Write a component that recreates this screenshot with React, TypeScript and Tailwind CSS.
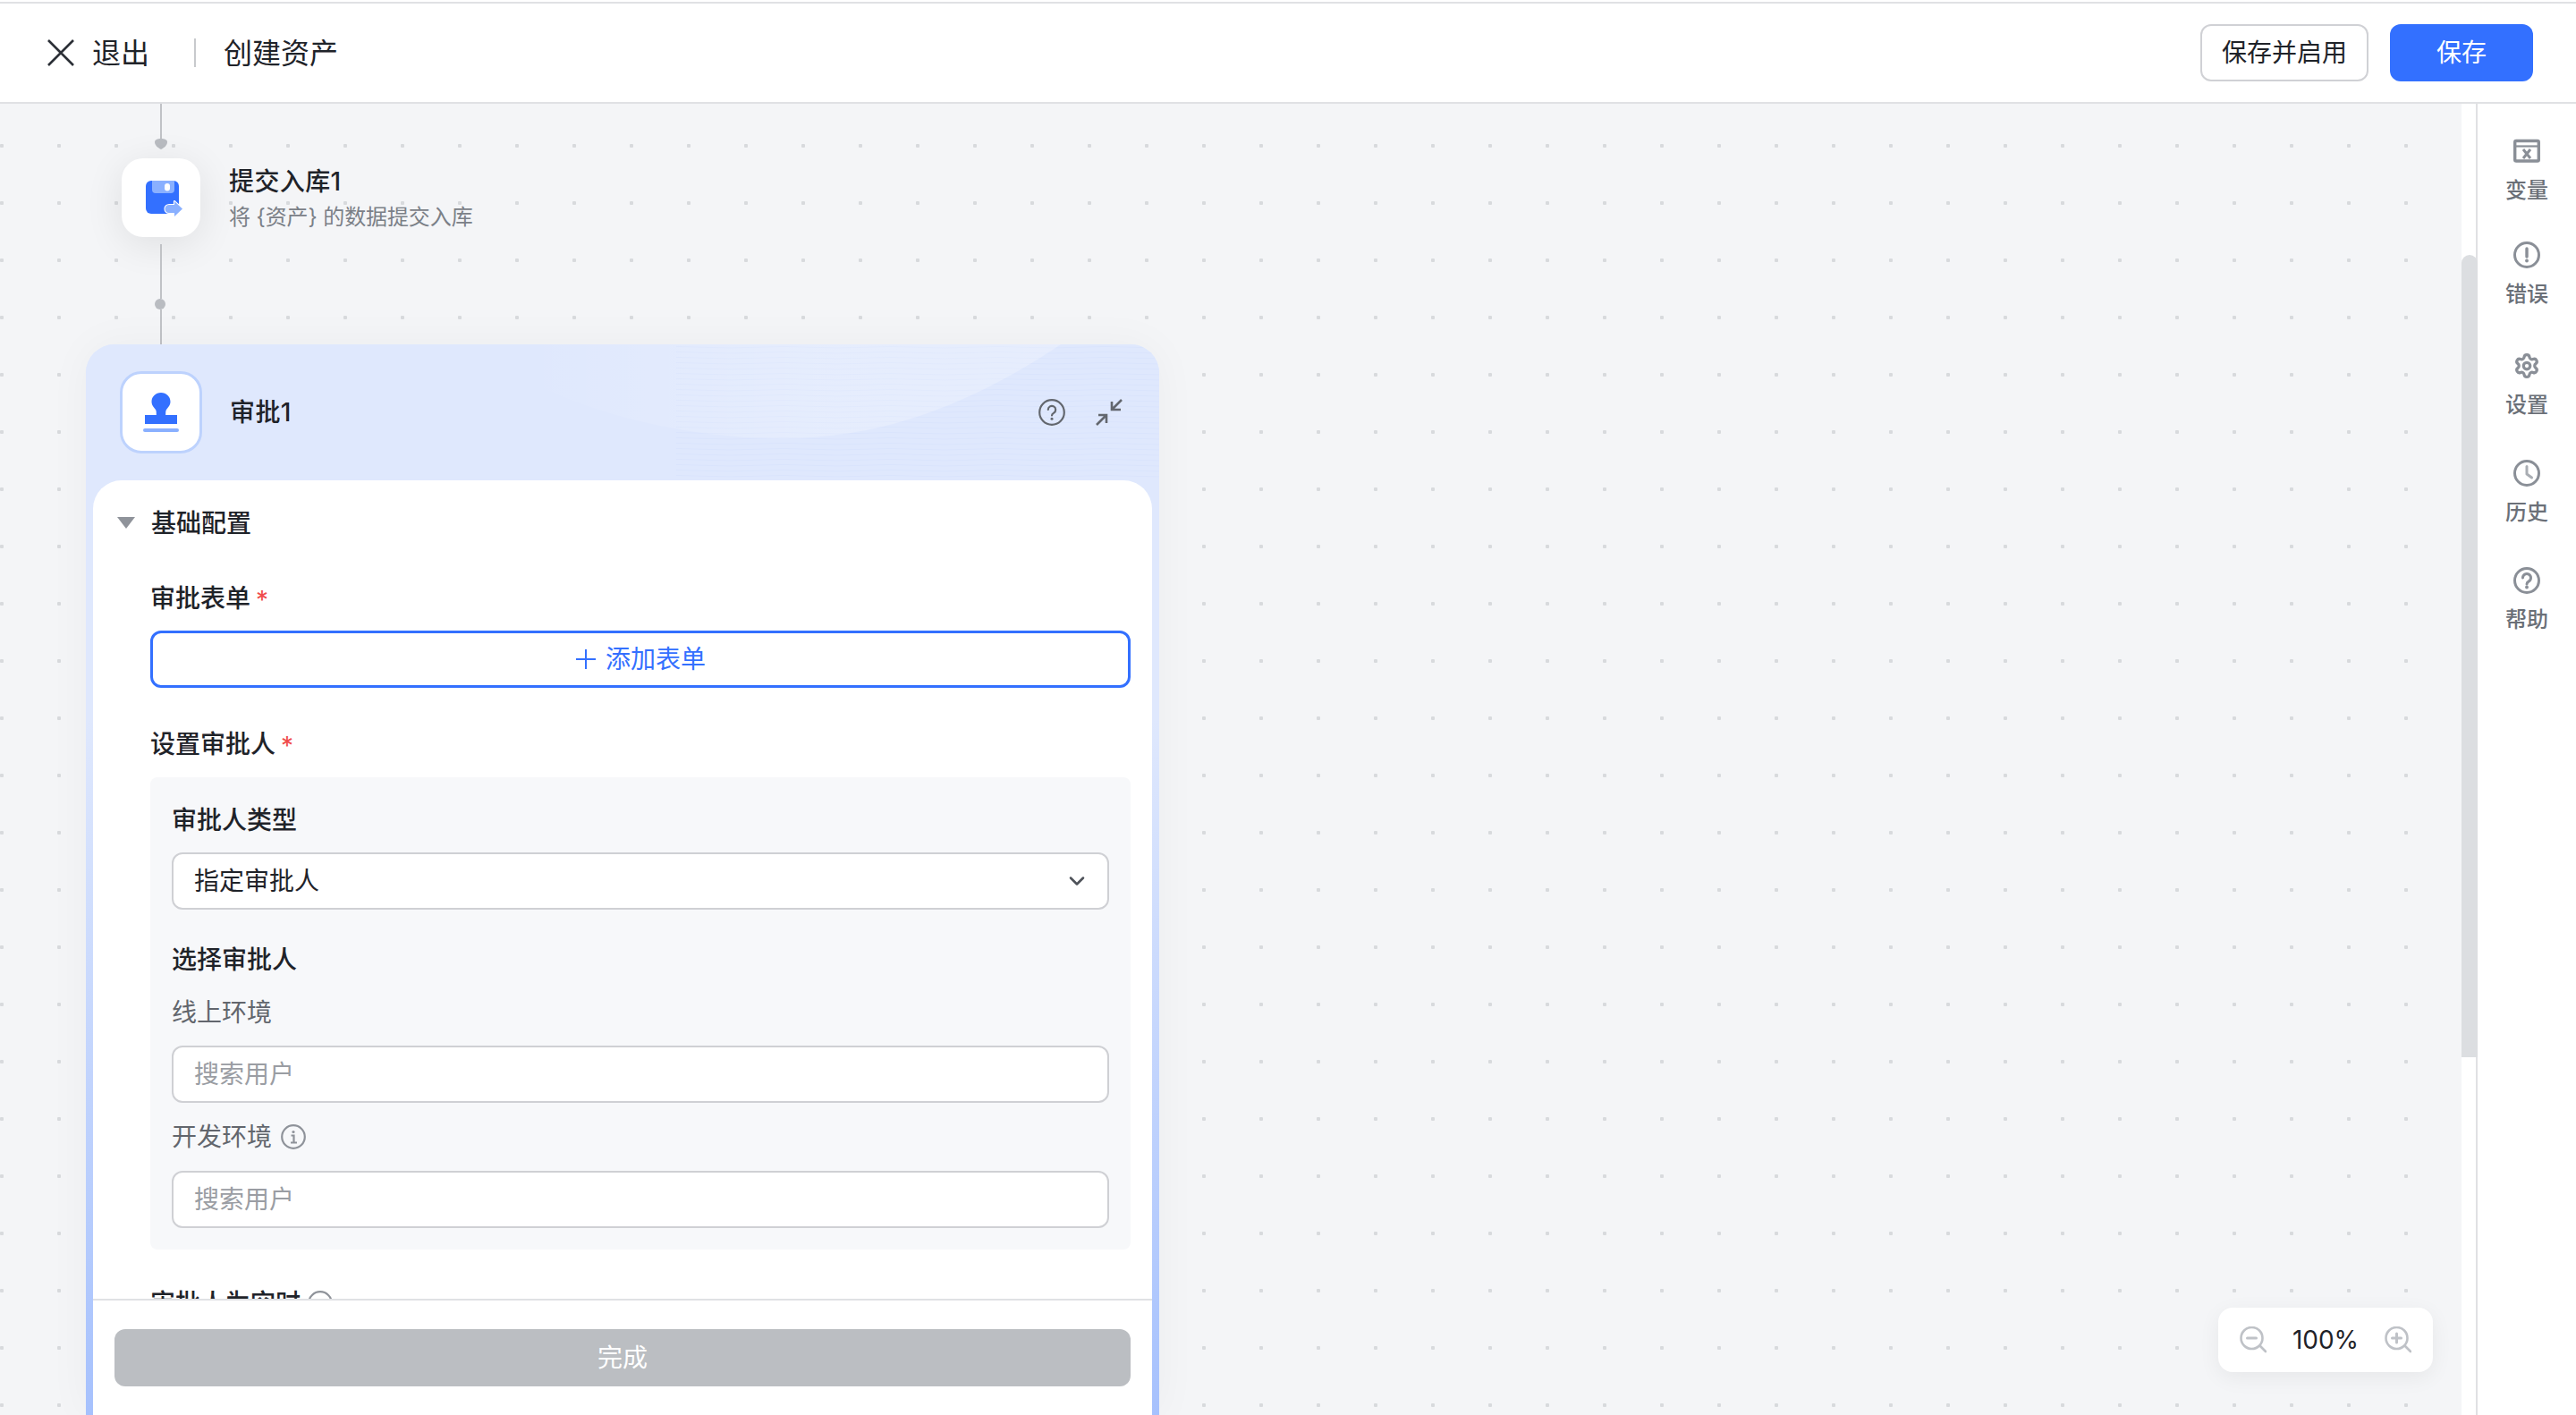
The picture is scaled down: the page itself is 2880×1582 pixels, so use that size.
import { ChevronDown, Settings } from 'lucide-react'

const font = { fontFamily: 'Inter, "Noto Sans CJK SC", "Noto Sans", sans-serif' }

const sideIconClass = 'h-[30px] w-[30px] shrink-0 text-[#8a8f97]'

const sideItems = [
  {
    label: '变量',
    gap: 'mt-0',
    icon: (
      <svg viewBox="0 0 30 30" fill="none" stroke="currentColor" strokeWidth={3.4} className={sideIconClass}>
        <rect x="1.700" y="3.500" width="26.600" height="22.500" rx="1.500" />
        <path d="M2 9.500h26" strokeWidth={2.200} />
        <path d="M11 13l8 10M19 13l-8 10" strokeWidth={3} />
      </svg>
    ),
  },
  {
    label: '错误',
    gap: 'mt-[39px]',
    icon: (
      <svg viewBox="0 0 30 30" fill="none" stroke="currentColor" strokeWidth={3} className={sideIconClass}>
        <circle cx="15" cy="15" r="13.500" />
        <path d="M15 8v9" strokeWidth={3.400} strokeLinecap="round" />
        <circle cx="15" cy="21.500" r="1.900" fill="currentColor" stroke="none" />
      </svg>
    ),
  },
  {
    label: '设置',
    gap: 'mt-[47px]',
    icon: <Settings strokeWidth={2.6} className={sideIconClass} />,
  },
  {
    label: '历史',
    gap: 'mt-[43px]',
    icon: (
      <svg viewBox="0 0 30 30" fill="none" stroke="currentColor" strokeWidth={3} className={sideIconClass}>
        <circle cx="15" cy="15" r="13.500" />
        <path d="M15 7.500V16l5.500 4" strokeLinecap="round" strokeLinejoin="round" stroke="#a9adb3" />
      </svg>
    ),
  },
  {
    label: '帮助',
    gap: 'mt-[43px]',
    icon: (
      <svg viewBox="0 0 30 30" fill="none" stroke="currentColor" strokeWidth={3} className={sideIconClass}>
        <circle cx="15" cy="15" r="13.500" />
        <path d="M10.500 12a4.500 4.500 0 1 1 6.800 3.900c-1.400.8-2.300 1.500-2.300 3" strokeLinecap="round" />
        <circle cx="15" cy="22.500" r="1.900" fill="currentColor" stroke="none" />
      </svg>
    ),
  },
]

const FloppyIcon = () => (
  <svg viewBox="0 0 44 44" className="h-[44px] w-[44px] translate-x-[3px]">
    <rect x="2" y="3" width="37" height="37" rx="6" fill="#3370ff" />
    <path d="M9 3h25v10a4 4 0 0 1-4 4H13a4 4 0 0 1-4-4Z" fill="#8ab0ff" />
    <rect x="23" y="6" width="6" height="8.500" rx="3" fill="#fff" />
    <path
      d="M28 30h6v-4l9 8.500-9 8.500v-4h-6a4.500 4.500 0 0 1 0-9Z"
      fill="#8ab0ff"
      stroke="#fff"
      strokeWidth={2.200}
      strokeLinejoin="round"
      paintOrder="stroke"
    />
  </svg>
)

const StampIcon = () => (
  <svg viewBox="0 0 44 48" className="h-[48px] w-[44px]">
    <path
      d="M22 2c6 0 10.500 4.500 10.500 10 0 4-2.500 6.500-4.500 9-.8 1-.8 3-.8 6H40v10H4V27h12.800c0-3 0-5-.8-6-2-2.500-4.500-5-4.500-9C11.500 6.500 16 2 22 2Z"
      fill="#3370ff"
    />
    <rect x="2" y="42" width="40" height="4" rx="2" fill="#8ab0ff" />
  </svg>
)

const Required = () => <span className="mt-[4px] ml-[6px] text-[28px] leading-none font-normal text-[#f04b4b]">*</span>

const TextField = () => (
  <input
    readOnly
    placeholder="搜索用户"
    style={font}
    className="block h-[64px] w-full rounded-[12px] border-2 border-[#cfd0d4] bg-white px-[23px] text-[28px] text-[#1f2329] outline-none placeholder:text-[#9a9da3]"
  />
)

const ZoomIcon = ({ plus }: { plus?: boolean }) => (
  <svg viewBox="0 0 30 30" fill="none" stroke="#bfc2c7" strokeWidth={2.600} className="h-[30px] w-[30px]">
    <circle cx="13.500" cy="13" r="12" />
    <path d="M23 22l6 6" strokeLinecap="round" />
    <path d={plus ? 'M8.500 13h10M13.500 8v10' : 'M8.500 13h10'} strokeWidth={3} strokeLinecap="round" />
  </svg>
)

export default function App() {
  return (
    <div style={font} className="flex h-[1582px] w-[2880px] flex-col overflow-hidden bg-white text-[#1f2329]">
      <header className="mt-[2px] flex h-[114px] shrink-0 items-center justify-between border-t-2 border-b-2 border-[#e0e1e4] bg-white pr-[48px] pl-[53px]">
        <div className="flex items-center">
          <svg viewBox="0 0 30 30" fill="none" stroke="#2b2f36" strokeWidth={2.600} className="h-[30px] w-[30px]">
            <path d="M1 1l28 28M29 1L1 29" />
          </svg>
          <span className="mt-[2px] ml-[20px] text-[32px] leading-[44px]">退出</span>
          <span className="mr-[31px] ml-[50px] h-[32px] w-[2px] bg-[#c8cacd]" />
          <span className="mt-[2px] text-[32px] leading-[44px]">创建资产</span>
        </div>
        <div className="flex items-center gap-[24px]">
          <button className="h-[64px] w-[188px] rounded-[12px] border-2 border-[#d0d1d5] bg-white text-[28px] text-[#1f2329]">
            保存并启用
          </button>
          <button className="h-[64px] w-[160px] rounded-[12px] bg-[#3370ff] text-[28px] text-white">保存</button>
        </div>
      </header>

      <div className="flex min-h-0 flex-1">
        <main className="relative flex min-w-0 flex-1 flex-col overflow-hidden bg-[#f4f5f7] bg-[radial-gradient(circle,#d8dadd_2px,transparent_2.5px)] bg-[size:64px_64px] bg-[position:-30px_15px]">
          <div className="ml-[136px] flex w-[88px] shrink-0 flex-col items-center">
            <div className="h-[39px] w-[2px] bg-[#c0c2c6]" />
            <svg viewBox="0 0 14 12" className="h-[12px] w-[14px]">
              <path d="M7 12C3 10 0 7 0 4c0-3 3-4 7-4s7 1 7 4c0 3-3 6-7 8Z" fill="#b9bcc1" />
            </svg>
          </div>

          <div className="mt-[10px] ml-[136px] flex shrink-0 items-start">
            <div className="flex h-[88px] w-[88px] items-center justify-center rounded-[24px] bg-white shadow-[0_8px_44px_rgba(0,0,0,0.09)]">
              <FloppyIcon />
            </div>
            <div className="ml-[32px] pt-[6px]">
              <div className="text-[28px] leading-[40px] font-medium tracking-[0.4px]">提交入库1</div>
              <div className="text-[24px] leading-[40px] tracking-[-0.1px] text-[#7b8087]">将 {'{资产}'} 的数据提交入库</div>
            </div>
          </div>

          <div className="mt-[8px] ml-[136px] flex w-[88px] shrink-0 flex-col items-center">
            <div className="h-[61px] w-[2px] bg-[#c0c2c6]" />
            <div className="-ml-[2px] h-[12px] w-[12px] rounded-full bg-[#b9bcc1]" />
            <div className="h-[39px] w-[2px] bg-[#c0c2c6]" />
          </div>

          <section className="ml-[96px] flex min-h-0 w-[1200px] flex-1 flex-col rounded-t-[32px] bg-[linear-gradient(180deg,#dfe8fd_35%,#a6c1fd_100%)] shadow-[0_0_50px_rgba(0,0,0,0.04)]">
            <div className="relative flex h-[152px] shrink-0 items-center overflow-hidden rounded-t-[32px] bg-[#dfe8fd] pr-[41px] pl-[38px]">
              <svg viewBox="0 0 1200 152" className="absolute inset-0 h-[152px] w-[1200px]">
                <defs>
                  <linearGradient id="wave" x1="0" y1="0" x2="1" y2="0">
                    <stop offset="0" stopColor="#fff" stopOpacity="0" />
                    <stop offset="0.5" stopColor="#fff" stopOpacity="0.2" />
                    <stop offset="1" stopColor="#fff" stopOpacity="0.24" />
                  </linearGradient>
                  <pattern id="stripes" width="120" height="6" patternUnits="userSpaceOnUse">
                    <path d="M0 4 Q60 1 120 4" fill="none" stroke="#d3dffc" strokeWidth="1" />
                  </pattern>
                </defs>
                <rect x="660" y="0" width="540" height="152" fill="url(#stripes)" opacity="0.45" />
                <path d="M488 38C590 90 700 105 780 105C900 105 1000 60 1090 0H488Z" fill="url(#wave)" />
              </svg>
              <div className="relative flex h-[92px] w-[92px] items-center justify-center rounded-[24px] border-[3px] border-[#bdd2fd] bg-white">
                <StampIcon />
              </div>
              <span className="relative ml-[31px] text-[28px] leading-[40px] font-medium tracking-[0.4px]">审批1</span>
              <div className="relative ml-auto flex items-center gap-[34px] text-[#63676e]">
                <svg viewBox="0 0 30 30" fill="none" stroke="currentColor" strokeWidth={2.200} className="h-[30px] w-[30px]">
                  <circle cx="15" cy="15" r="13.800" />
                  <path d="M10.800 12a4.200 4.200 0 1 1 6.400 3.600c-1.300.8-2.200 1.400-2.200 2.900" strokeLinecap="round" />
                  <circle cx="15" cy="22.300" r="1.500" fill="currentColor" stroke="none" />
                </svg>
                <svg viewBox="0 0 30 30" fill="none" stroke="currentColor" strokeWidth={2.600} className="h-[30px] w-[30px]">
                  <path d="M29 1l-10 10M18 3v9h10M1 29l10-10M3 18h9v9" />
                </svg>
              </div>
            </div>

            <div className="mx-[8px] flex min-h-0 flex-1 flex-col rounded-t-[32px] bg-white">
              <div className="min-h-0 flex-1 overflow-hidden pt-[26px]">
                <div className="flex items-center pl-[27px]">
                  <svg viewBox="0 0 20 13" className="h-[13px] w-[20px]">
                    <path d="M0 0h20L10 13Z" fill="#8f939a" />
                  </svg>
                  <span className="mt-[2px] ml-[18px] text-[28px] leading-[40px] font-medium">基础配置</span>
                </div>

                <div className="pr-[24px] pl-[64px]">
                  <div className="mt-[44px] flex items-center text-[28px] leading-[40px] font-medium">
                    审批表单
                    <Required />
                  </div>
                  <button className="mt-[16px] flex h-[64px] w-full items-center justify-center rounded-[12px] border-[3px] border-[#3370ff] bg-white text-[28px] text-[#3370ff]">
                    <svg viewBox="0 0 24 24" fill="none" stroke="currentColor" strokeWidth={2} className="mr-[10px] h-[24px] w-[24px]">
                      <path d="M12 1v22M1 12h22" />
                    </svg>
                    添加表单
                  </button>

                  <div className="mt-[43px] flex items-center text-[28px] leading-[40px] font-medium">
                    设置审批人
                    <Required />
                  </div>
                  <div className="mt-[17px] rounded-[8px] bg-[#f7f8fa] px-[24px] pt-[28px] pb-[24px]">
                    <div className="text-[28px] leading-[40px] font-medium">审批人类型</div>
                    <div className="mt-[16px] flex h-[64px] items-center justify-between rounded-[12px] border-2 border-[#cfd0d4] bg-white pr-[20px] pl-[23px] text-[28px]">
                      指定审批人
                      <ChevronDown className="h-[28px] w-[28px] text-[#4e5259]" strokeWidth={2.2} />
                    </div>
                    <div className="mt-[36px] text-[28px] leading-[40px] font-medium">选择审批人</div>
                    <div className="mt-[19px] text-[28px] leading-[40px] text-[#62666d]">线上环境</div>
                    <div className="mt-[17px]">
                      <TextField />
                    </div>
                    <div className="mt-[18px] flex items-center text-[28px] leading-[40px] text-[#62666d]">
                      开发环境
                      <svg viewBox="0 0 28 28" fill="none" stroke="#8f939a" strokeWidth={2.200} className="ml-[10px] h-[28px] w-[28px]">
                        <circle cx="14" cy="14" r="12.800" />
                        <circle cx="14" cy="8.500" r="1.600" fill="#8f939a" stroke="none" />
                        <path d="M11.500 12.500H14.500V20M11 20.500h7" />
                      </svg>
                    </div>
                    <div className="mt-[18px]">
                      <TextField />
                    </div>
                  </div>
                  <div className="mt-[40px] flex items-center text-[28px] leading-[40px] font-medium">
                    审批人为空时
                    <svg viewBox="0 0 28 28" fill="none" stroke="#8f939a" strokeWidth={2.200} className="ml-[8px] h-[28px] w-[28px]">
                      <circle cx="14" cy="14" r="12.800" />
                    </svg>
                  </div>
                </div>
              </div>

              <div className="h-[130px] shrink-0 border-t-2 border-[#e0e1e4] pt-[32px] pr-[24px] pl-[24px]">
                <button className="h-[64px] w-full rounded-[12px] bg-[#bbbec2] text-[28px] text-white">完成</button>
              </div>
            </div>
          </section>

          <div className="absolute right-[32px] bottom-[48px] flex h-[72px] w-[240px] items-center justify-between rounded-[16px] bg-white px-[24px] shadow-[0_6px_24px_rgba(0,0,0,0.06)]">
            <ZoomIcon />
            <span className="text-[28px] leading-[40px]">100%</span>
            <ZoomIcon plus />
          </div>
        </main>

        <div className="relative w-[18px] shrink-0 border-r-2 border-[#e0e1e4] bg-white">
          <div className="absolute top-[169px] -right-[2px] h-[897px] w-[18px] rounded-t-[9px] bg-[#dcdee1]" />
        </div>

        <aside className="flex w-[110px] shrink-0 flex-col items-center pt-[38px]">
          {sideItems.map((item) => (
            <div key={item.label} className={`flex flex-col items-center ${item.gap}`}>
              {item.icon}
              <span className="mt-[11px] text-[24px] leading-[36px] font-medium text-[#6b7078]">{item.label}</span>
            </div>
          ))}
        </aside>
      </div>
    </div>
  )
}
